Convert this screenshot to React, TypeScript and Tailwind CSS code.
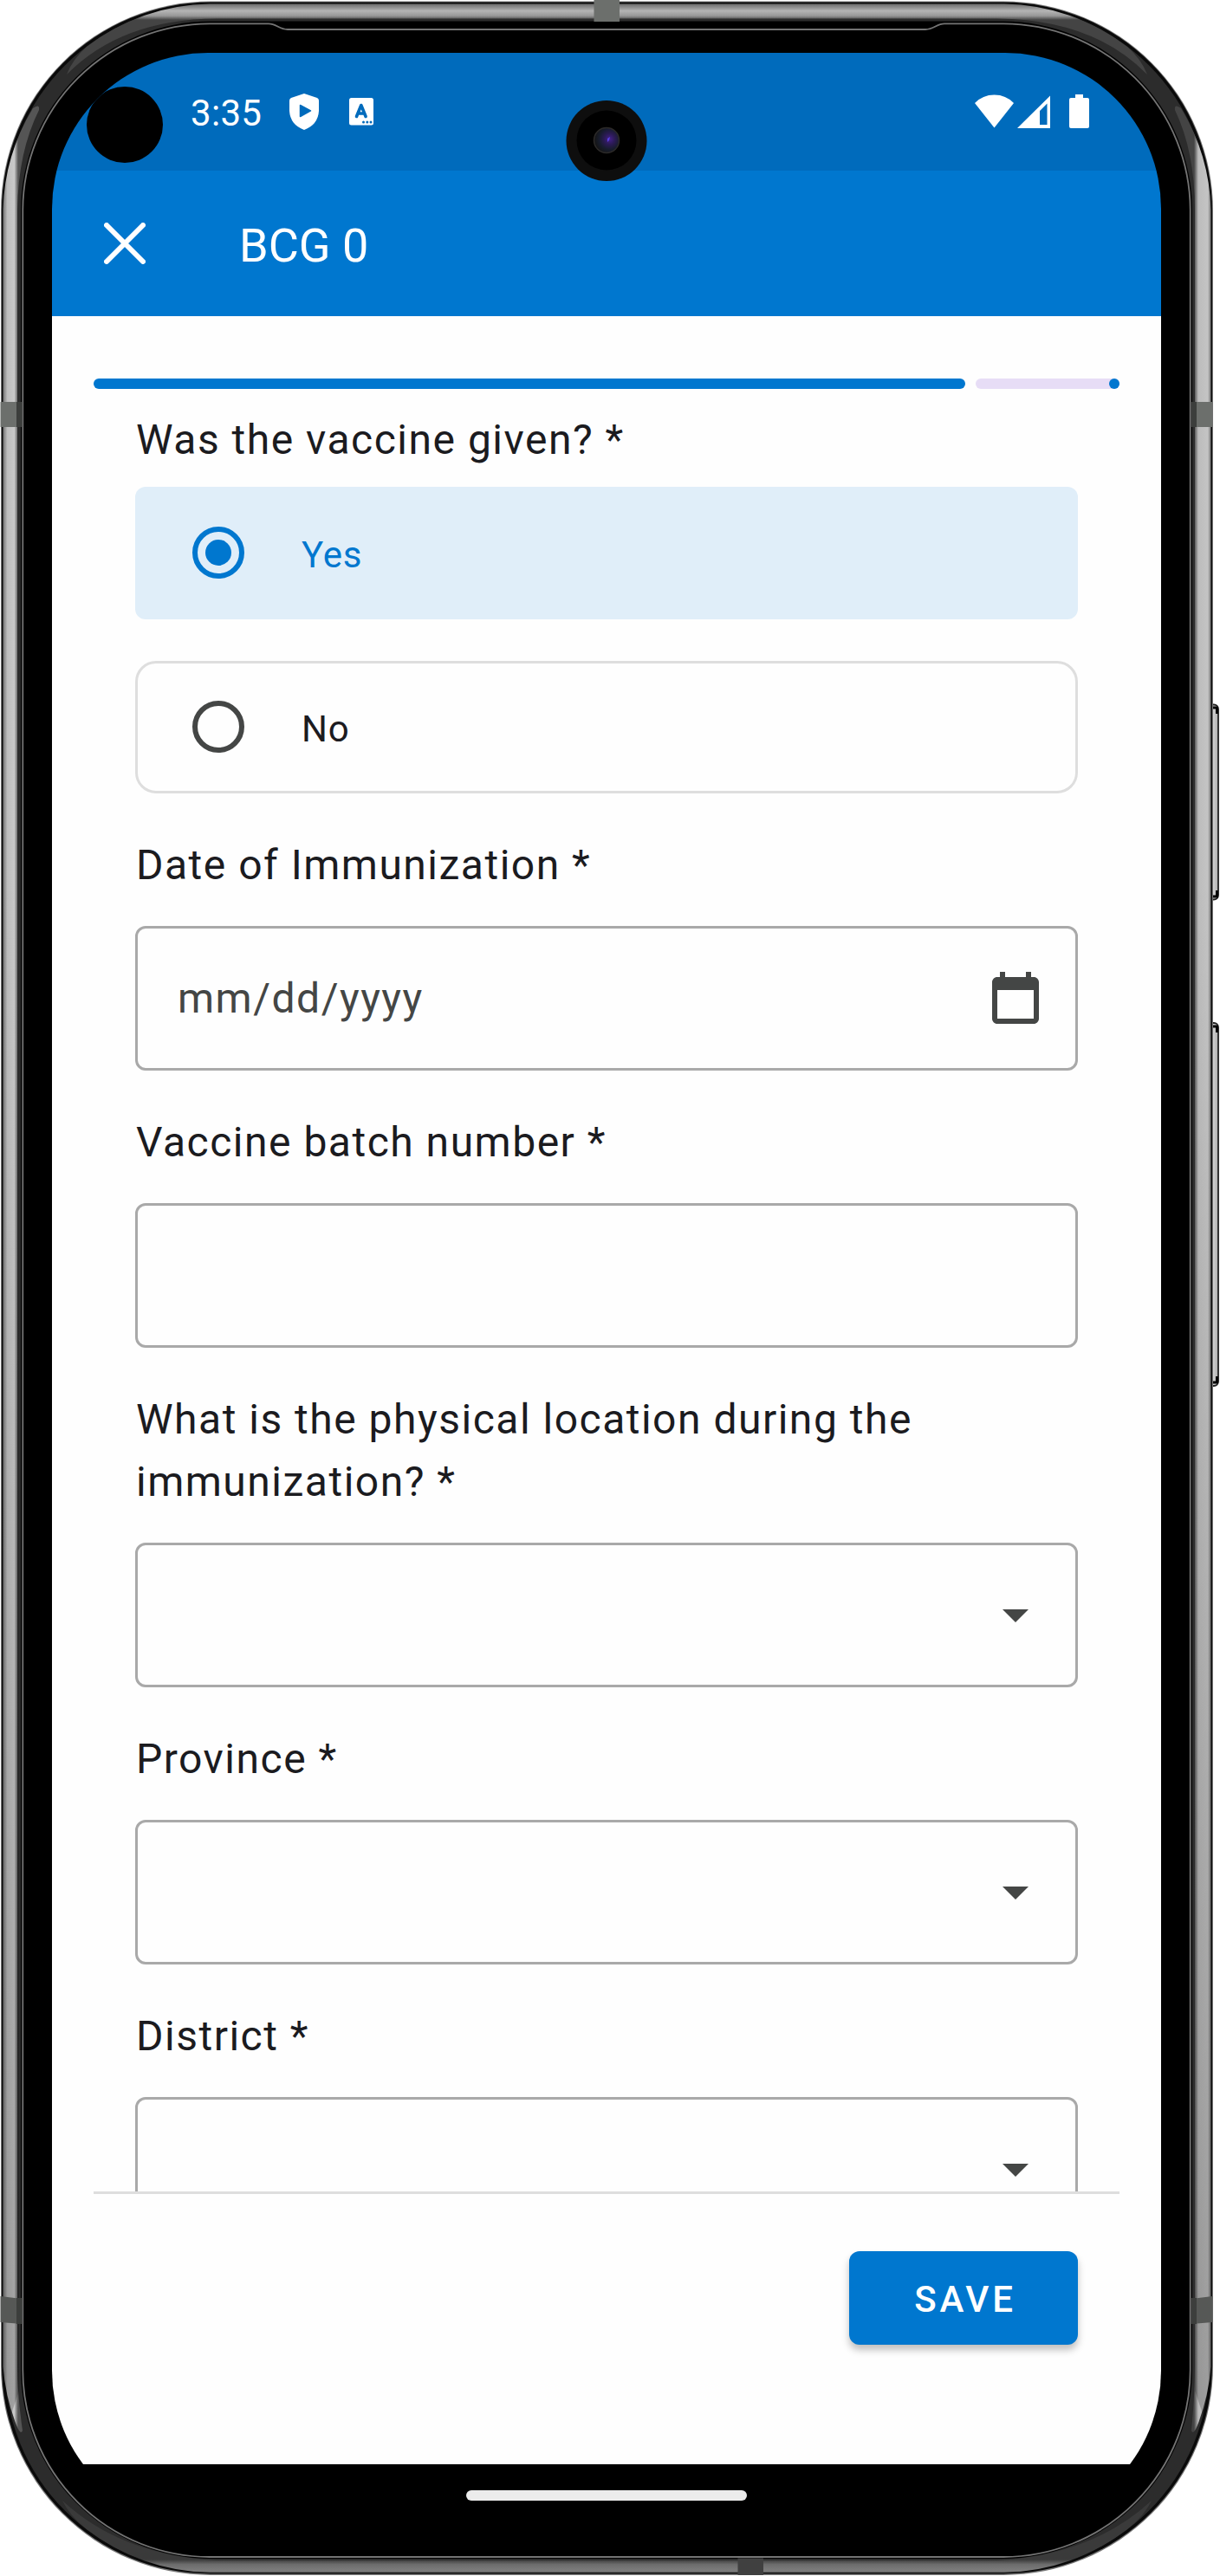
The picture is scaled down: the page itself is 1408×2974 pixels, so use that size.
import React from "react";

function Bezel() {
  return (
    <svg className="absolute inset-0" width="1408" height="2974" viewBox="0 0 1408 2974" aria-hidden="true">
      <defs>
        <linearGradient id="left" gradientUnits="userSpaceOnUse" x1="3" y1="0" x2="21" y2="0">
          <stop offset="0" stopColor="#6a6a6a" />
          <stop offset="0.3" stopColor="#bdbdbd" />
          <stop offset="0.75" stopColor="#c9c9c9" />
          <stop offset="1" stopColor="#555" />
        </linearGradient>
        <linearGradient id="right" gradientUnits="userSpaceOnUse" x1="1398" y1="0" x2="1378" y2="0">
          <stop offset="0" stopColor="#6a6a6a" />
          <stop offset="0.2" stopColor="#c4c4c4" />
          <stop offset="0.75" stopColor="#bcbcbc" />
          <stop offset="1" stopColor="#444" />
        </linearGradient>
        <linearGradient id="top" gradientUnits="userSpaceOnUse" x1="0" y1="4" x2="0" y2="23">
          <stop offset="0" stopColor="#666" />
          <stop offset="0.45" stopColor="#b4b4b4" />
          <stop offset="0.75" stopColor="#989898" />
          <stop offset="1" stopColor="#444" />
        </linearGradient>
        <linearGradient id="bottom" gradientUnits="userSpaceOnUse" x1="0" y1="2955" x2="0" y2="2971">
          <stop offset="0" stopColor="#3a3a3a" />
          <stop offset="0.35" stopColor="#6c6c6c" />
          <stop offset="0.8" stopColor="#7d7d7d" />
          <stop offset="1" stopColor="#555" />
        </linearGradient>
        <linearGradient id="shade" x1="0" y1="0" x2="0" y2="1">
          <stop offset="0.3" stopColor="#000" stopOpacity="0" />
          <stop offset="1" stopColor="#000" stopOpacity="0.2" />
        </linearGradient>
        <linearGradient id="key" x1="0" y1="0" x2="1" y2="0">
          <stop offset="0" stopColor="#666" />
          <stop offset="0.5" stopColor="#cfcfcf" />
          <stop offset="1" stopColor="#aaa" />
        </linearGradient>
      </defs>
      <rect x="1395" y="813.5" width="11" height="225" rx="5" fill="url(#key)" stroke="#222" strokeWidth="1.8" />
      <rect x="1395" y="1181" width="11" height="419" rx="5" fill="url(#key)" stroke="#222" strokeWidth="1.8" />
      <path d="M1399 817H1404.500V824M1399 1035H1404.500V1028M1399 1185H1404.500V1192M1399 1596H1404.500V1589" fill="none" stroke="#000" strokeWidth="3" strokeLinejoin="round" />
      <rect x="1" y="1.5" width="1399" height="2971.5" rx="242" fill="#777" />
      <rect x="2" y="2.5" width="1397" height="2969" rx="241" fill="#0a0a0a" />
      <rect x="5.5" y="6" width="1390" height="2962" rx="237" fill="#2c2c2c" />
      <path d="M3.500 242A238 238 0 0 1 38 125Q46 119 45 127Q21 175 20 242V2732Q20 2765 26 2806Q24 2812 19 2800A238 238 0 0 1 3.500 2732Z" fill="url(#left)" />
      <path d="M1397.500 242A238 238 0 0 0 1363 125Q1355 119 1356 127Q1379 175 1379 242V2732Q1379 2765 1375 2806Q1377 2812 1382 2800A238 238 0 0 0 1397.500 2732Z" fill="url(#right)" />
      <path d="M3.500 242H22V2760L12 2790Q4 2765 3.500 2732ZM1379 242H1397.500V2732Q1397 2765 1389 2790L1379 2760Z" fill="url(#shade)" />
      <path d="M242 4.500A238 238 0 0 0 100 54Q84 68 77 86Q140 22 250 21.500H1151Q1261 22 1324 86Q1317 68 1301 54A238 238 0 0 0 1159 4.500Z" fill="url(#top)" />
      <path d="M242 2970A238 238 0 0 1 100 2920Q80 2904 72 2887Q140 2950 250 2956H1151Q1261 2950 1329 2887Q1321 2904 1301 2920A238 238 0 0 1 1159 2970Z" fill="url(#bottom)" />
      <rect x="24" y="24.500" width="1352" height="2929.500" rx="219" fill="#000" />
      <path
        d="M26.300 242A216 216 0 0 1 242 27.300H310C319 27.300 322 34 332 34H1068C1078 34 1081 27.300 1090 27.300H1158A216 216 0 0 1 1373.700 242V2736A216 216 0 0 1 1158 2952H242A216 216 0 0 1 26.300 2736Z"
        fill="#000"
        stroke="#747474"
        strokeWidth="1.8"
      />
      <g fill="#6c6f6c">
        <path d="M0.500 464H25V493H0.500ZM1375 464H1399.500V493H1375Z" />
        <path d="M0.500 2651L25 2654V2683L0.500 2681ZM1375 2654L1399.500 2651V2681L1375 2683Z" fill="#565856" />
        <path d="M685.500 0H715V25H685.500Z" />
        <path d="M851.500 2953.500H881V2973H851.500Z" fill="#404040" />
      </g>
      <path d="M19 464H25V493H19ZM1375 464H1381V493H1375ZM19 2653H25V2683H19ZM1375 2653H1381V2683H1375Z" fill="#3c3e3c" />
    </svg>
  );
}

function CameraLens() {
  return (
    <svg className="absolute left-[653px] top-[115px]" width="94" height="95" viewBox="0 0 94 95" aria-hidden="true">
      <defs>
        <radialGradient id="lens" cx="0.62" cy="0.45" r="0.6">
          <stop offset="0" stopColor="#43208a" />
          <stop offset="0.35" stopColor="#2b1a55" />
          <stop offset="0.7" stopColor="#171c2c" />
          <stop offset="1" stopColor="#151515" />
        </radialGradient>
      </defs>
      <circle cx="47" cy="47.500" r="46.500" fill="#0e0e0e" />
      <circle cx="47" cy="47" r="34.500" fill="#000" />
      <circle cx="47" cy="47" r="14.500" fill="url(#lens)" stroke="#2c2a29" strokeWidth="1.500" />
      <path d="M48 45l3-2-1 4-2 2z" fill="#5a3fe0" />
    </svg>
  );
}

function StatusBar() {
  return (
    <div className="flex h-[136px] shrink-0 items-start bg-[#006bbc] text-white">
      <div className="ml-10 mt-[39px] size-[88px] rounded-full bg-black" />
      <span className="ml-[32px] mt-[40px] w-[82px] text-[42px] leading-[60px] tracking-[0.3px]">3:35</span>
      <svg className="ml-8 mt-[47px]" width="34" height="42" viewBox="0 0 34 42" aria-hidden="true">
        <path d="M17 0L32 5Q34 6 34 8V20Q33 36 17 42Q1 36 0 20V8Q0 6 2 5Z" fill="#fff" />
        <path d="M12.500 13.500L24.500 19.800L12.500 26.500Z" fill="#006bbc" stroke="#006bbc" strokeWidth="1.500" strokeLinejoin="round" />
      </svg>
      <svg className="ml-[35px] mt-[52px]" width="28" height="32" viewBox="0 0 28 32" aria-hidden="true">
        <rect width="28" height="31.500" rx="2.500" fill="#fff" />
        <path d="M8.500 21.500L13.800 8.500L19.100 21.500M10.500 18H17" fill="none" stroke="#006bbc" strokeWidth="3.600" strokeLinecap="round" strokeLinejoin="round" />
        <circle cx="16.500" cy="28" r="1.500" fill="#006bbc" />
        <circle cx="20.800" cy="28" r="1.500" fill="#006bbc" />
        <circle cx="25" cy="28" r="1.500" fill="#006bbc" />
      </svg>
      <div className="ml-auto mr-[83px] mt-[48px] flex">
        <svg width="45" height="39" viewBox="0 0 45 39" aria-hidden="true">
          <path d="M22.500 38.500L0 10Q9 0.500 22.500 0.500Q36 0.500 45 10Z" fill="#fff" />
        </svg>
        <svg className="ml-1" width="38" height="39" viewBox="0 0 38 39" aria-hidden="true">
          <path fillRule="evenodd" d="M38 1.500V39H0ZM34.500 10.500L26 19V35H34.500Z" fill="#fff" />
        </svg>
        <svg className="ml-[22px]" width="23" height="39" viewBox="0 0 23 39" aria-hidden="true">
          <path d="M7 0H16V4H21Q23 4 23 6V37Q23 39 21 39H2Q0 39 0 37V6Q0 4 2 4H7Z" fill="#fff" />
        </svg>
      </div>
    </div>
  );
}

function AppBar() {
  return (
    <header className="flex h-[168px] shrink-0 items-center bg-[#0077cf] text-white">
      <button className="ml-[60px] size-12" aria-label="Close">
        <svg width="48" height="48" viewBox="0 0 48 48" aria-hidden="true">
          <path d="M3 3L45 45M45 3L3 45" stroke="#fff" strokeWidth="6" strokeLinecap="round" />
        </svg>
      </button>
      <h1 className="ml-[108px] pt-[5px] text-[54px] leading-[64px]">BCG 0</h1>
    </header>
  );
}

function Radio({ label, checked = false }: { label: string; checked?: boolean }) {
  return (
    <div
      className={
        checked
          ? "flex h-[153px] items-center rounded-[12px] bg-[#e0eef9] pl-[66px] text-[#0077cf]"
          : "flex h-[153px] items-center rounded-[24px] border-3 border-[#dedede] pl-[63px] text-[#1c1b1f]"
      }
    >
      <span
        className={
          checked
            ? "mb-px flex size-[60px] items-center justify-center rounded-full border-6 border-[#0077cf]"
            : "mb-px size-[60px] rounded-full border-6 border-[#444645]"
        }
      >
        {checked && <span className="size-[30px] rounded-full bg-[#0077cf]" />}
      </span>
      <span className="ml-[66px] pt-1 text-[42px] leading-[60px] tracking-[0.75px]">{label}</span>
    </div>
  );
}

function Field({ label, children }: { label: React.ReactNode; children?: React.ReactNode }) {
  return (
    <div className="mt-[47px] shrink-0">
      <div className="pl-px text-[48px] leading-[72px] tracking-[1.5px] text-[#1b1b1f]">{label}</div>
      <div className="mt-[34px] flex h-[167px] items-center justify-between rounded-[12px] border-3 border-[#a9a9a9] pl-[46px] pr-[33px]">
        {children}
      </div>
    </div>
  );
}

function DropdownArrow() {
  return (
    <svg className="mb-px ml-auto" width="72" height="72" viewBox="0 0 24 24" aria-hidden="true">
      <path d="M7 10l5 5 5-5z" fill="#444645" />
    </svg>
  );
}

export default function App() {
  return (
    <div className="relative h-[2974px] w-[1408px] overflow-hidden bg-white pl-[60px] pt-[61px] font-['Roboto',sans-serif]">
      <Bezel />
      <div className="relative flex h-[2856px] w-[1280px] flex-col overflow-hidden rounded-[180px] bg-black">
        <StatusBar />
        <AppBar />
        <main className="flex h-[2480px] flex-col bg-[#fefefe] px-12 pt-[72px]">
          <div className="flex h-3 shrink-0 gap-3">
            <div className="w-[1006px] rounded-full bg-[#0077cf]" />
            <div className="flex flex-1 justify-end rounded-full bg-[#e7ddf6]">
              <div className="size-3 rounded-full bg-[#0077cf]" />
            </div>
          </div>
          <div className="flex h-[2081px] shrink-0 flex-col overflow-hidden px-12 pt-[23px]">
            <div className="shrink-0 pl-px text-[48px] leading-[72px] tracking-[1.5px] text-[#1b1b1f]">Was the vaccine given? *</div>
            <div className="mt-[18px] flex shrink-0 flex-col gap-12">
              <Radio label="Yes" checked />
              <Radio label="No" />
            </div>
            <Field label="Date of Immunization *">
              <span className="text-[48px] leading-[72px] tracking-[1.5px] text-[#444645]">mm/dd/yyyy</span>
              <svg className="mb-px" width="72" height="72" viewBox="0 0 24 24" aria-hidden="true">
                <path
                  fillRule="evenodd"
                  d="M19 4h-1V2h-2v2H8V2H6v2H5c-1.110 0-2 .9-2 2v14c0 1.100.89 2 2 2h14c1.100 0 2-.9 2-2V6c0-1.100-.9-2-2-2zM19 20H5V9h14z"
                  fill="#444645"
                />
              </svg>
            </Field>
            <Field label="Vaccine batch number *" />
            <Field
              label={
                <>
                  What is the physical location during the
                  <br />
                  immunization? *
                </>
              }
            >
              <DropdownArrow />
            </Field>
            <Field label="Province *">
              <DropdownArrow />
            </Field>
            <Field label="District *">
              <DropdownArrow />
            </Field>
          </div>
          <div className="h-[3px] shrink-0 bg-[#dedede]" />
          <div className="flex justify-end px-12 pt-[66px]">
            <button className="h-[108px] w-[264px] rounded-[12px] bg-[#0077cf] pl-1 pt-[3px] text-[42px] font-medium leading-[60px] tracking-[3.75px] text-white shadow-[0_6px_9px_rgba(0,0,0,0.25)]">
              SAVE
            </button>
          </div>
        </main>
        <div className="flex flex-1 justify-center pt-[30px]">
          <div className="h-3 w-[324px] rounded-full bg-[#ececec]" />
        </div>
      </div>
      <CameraLens />
    </div>
  );
}
